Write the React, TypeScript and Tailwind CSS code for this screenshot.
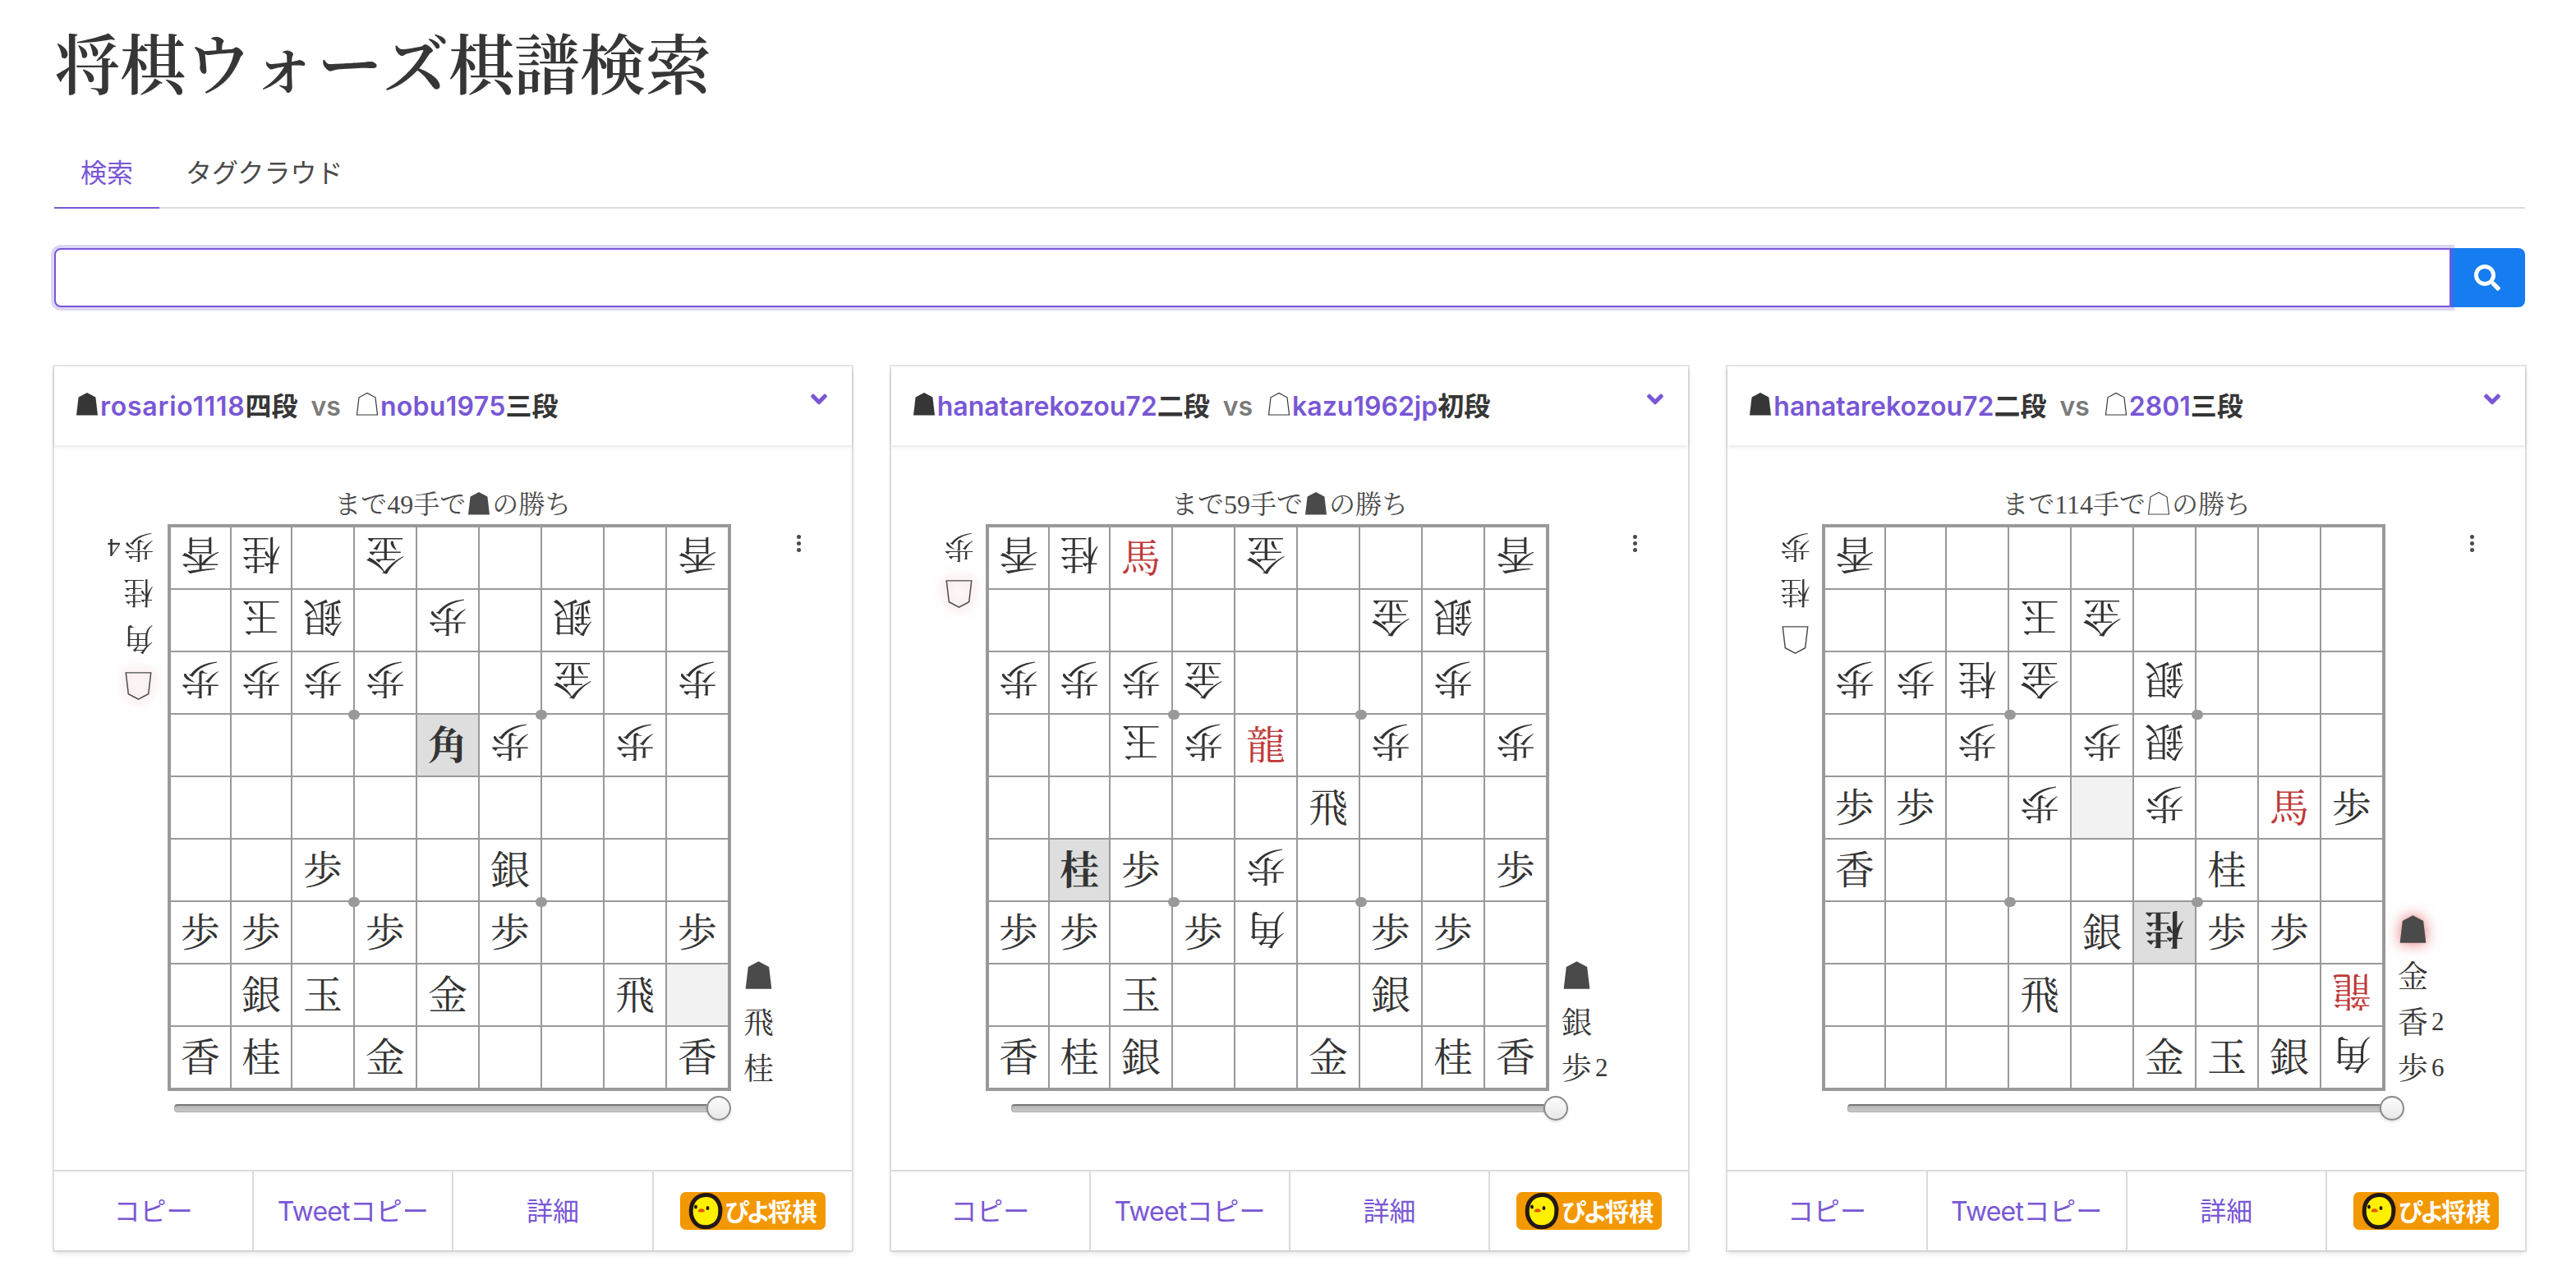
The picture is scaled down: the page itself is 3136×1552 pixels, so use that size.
import { FaAngleDown, FaSearch } from "react-icons/fa";

type Hand = { piece: string; count?: number };

type Game = {
  black: { name: string; grade: string; tracking?: string };
  white: { name: string; grade: string; tracking?: string };
  moves: number;
  winner: "black" | "white";
  board: string[];
  whiteHand: Hand[];
  blackHand: Hand[];
  handWidth: string;
  dots: string;
};

// Cell notation: "v" marks a white piece, "*" the last moved piece,
// "-" the square it came from and "." an empty square.
const games: Game[] = [
  {
    black: { name: "rosario1118", grade: "四段", tracking: "tracking-[0.75px]" },
    white: { name: "nobu1975", grade: "三段", tracking: "tracking-[0.3px]" },
    moves: 49,
    winner: "black",
    board: [
      "v香 v桂 . v金 . . . . v香",
      ". v玉 v銀 . v歩 . v銀 . .",
      "v歩 v歩 v歩 v歩 . . v金 . v歩",
      ". . . . 角* v歩 . v歩 .",
      ". . . . . . . . .",
      ". . 歩 . . 銀 . . .",
      "歩 歩 . 歩 . 歩 . . 歩",
      ". 銀 玉 . 金 . . 飛 -",
      "香 桂 . 金 . . . . 香",
    ],
    whiteHand: [{ piece: "歩", count: 4 }, { piece: "桂" }, { piece: "角" }],
    blackHand: [{ piece: "飛" }, { piece: "桂" }],
    handWidth: "w-[138px] pr-[17px]",
    dots: "left-[216px]",
  },
  {
    black: { name: "hanatarekozou72", grade: "二段" },
    white: { name: "kazu1962jp", grade: "初段" },
    moves: 59,
    winner: "black",
    board: [
      "v香 v桂 馬 . v金 . . . v香",
      ". . . . . . v金 v銀 .",
      "v歩 v歩 v歩 v金 . . . v歩 .",
      ". . v玉 v歩 龍 . v歩 . v歩",
      ". . . . . 飛 . . .",
      ". 桂* 歩 . v歩 . . . 歩",
      "歩 歩 . 歩 v角 . 歩 歩 .",
      ". . 玉 . . . 銀 . .",
      "香 桂 銀 . . 金 . 桂 香",
    ],
    whiteHand: [{ piece: "歩" }],
    blackHand: [{ piece: "銀" }, { piece: "歩", count: 2 }],
    handWidth: "w-[115.33px] pr-[14px]",
    dots: "left-[218px]",
  },
  {
    black: { name: "hanatarekozou72", grade: "二段" },
    white: { name: "2801", grade: "三段" },
    moves: 114,
    winner: "white",
    board: [
      "v香 . . . . . . . .",
      ". . . v玉 v金 . . . .",
      "v歩 v歩 v桂 v金 . v銀 . . .",
      ". . v歩 . v歩 v銀 . . .",
      "歩 歩 . v歩 - v歩 . 馬 歩",
      "香 . . . . . 桂 . .",
      ". . . . 銀 v桂* 歩 歩 .",
      ". . . 飛 . . . . v龍",
      ". . . . . 金 玉 銀 v角",
    ],
    whiteHand: [{ piece: "歩" }, { piece: "桂" }],
    blackHand: [{ piece: "金" }, { piece: "香", count: 2 }, { piece: "歩", count: 6 }],
    handWidth: "w-[114.67px] pr-[14px]",
    dots: "left-[218px]",
  },
];

function Koma({ filled, className }: { filled: boolean; className: string }) {
  return (
    <svg viewBox="0 0 32 32" className={className}>
      <path
        d={filled ? "M3 28.5 5.6 6.5 16 1 26.4 6.5 29 28.5Z" : "M3.5 28 6 6.8 16 1.5 26 6.8 28.5 28Z"}
        fill={filled ? "currentColor" : "none"}
        stroke={filled ? "none" : "currentColor"}
        strokeWidth="1.2"
      />
    </svg>
  );
}

function Cell({ code }: { code: string }) {
  const white = code.startsWith("v");
  const moved = code.endsWith("*");
  const piece = code.replace(/[v*.\-]/g, "");
  const promoted = piece === "馬" || piece === "龍";
  const bg = moved ? "bg-[#dedede]" : code === "-" ? "bg-[#f2f2f2]" : "bg-white";
  return (
    <div className={`flex items-center justify-center ${white ? "pb-[6px]" : "pb-[3px]"} ${bg}`}>
      {piece && (
        <span
          className={`pt-[4px] text-[48px] leading-[48px] ${white ? "rotate-180" : ""} ${moved ? "font-bold" : "font-normal"} ${
            promoted ? "text-[#bf3a3a]" : "text-[#333]"
          }`}
        >
          {piece}
        </span>
      )}
    </div>
  );
}

function HandPiece({ piece, count }: Hand) {
  return (
    <span className="flex h-14 items-center gap-[4px] pt-[3px] text-[#363636]">
      <span className="text-[37px] leading-[40px]">{piece}</span>
      {count && <span className="pb-[4px] text-[31px] leading-[40px]">{count}</span>}
    </span>
  );
}

function Turn({ filled, glow }: { filled: boolean; glow: boolean }) {
  return (
    <span className="flex h-14 w-[37px] items-center justify-center">
      <Koma
        filled={filled}
        className={`size-[39px] shrink-0 overflow-visible text-[#4a4a4a] ${
          glow ? "[filter:drop-shadow(0_0_7px_rgba(220,50,50,.45))_drop-shadow(0_0_10px_rgba(220,50,50,.3))]" : ""
        }`}
      />
    </span>
  );
}

function Board({ game }: { game: Game }) {
  return (
    <div className="relative shrink-0">
      <div className="grid grid-cols-[72px_72px_repeat(7,74px)] grid-rows-[repeat(9,74px)] gap-[2px] border-4 border-[#999] bg-[#999]">
        {game.board.flatMap((row, y) => row.split(" ").map((code, x) => <Cell key={`${y}-${x}`} code={code} />))}
      </div>
      <div className={`absolute top-[226px] ml-[4px] grid grid-cols-2 gap-x-[214px] gap-y-[216px] ${game.dots}`}>
        {[0, 1, 2, 3].map((n) => (
          <span key={n} className="h-3 w-3.5 rounded-full bg-[#999]" />
        ))}
      </div>
    </div>
  );
}

function Slider() {
  return (
    <div className="ml-[146px] flex h-[42px] w-[678px] items-center">
      <div className="h-[10px] flex-1 rounded-l-[4px] border border-[#aaa] border-t-2 border-t-[#777] bg-linear-to-b from-[#b4b4b4] to-[#cacaca]" />
      <div className="-ml-px size-[30px] rounded-full border-2 border-[#8a8a8a] bg-linear-to-b from-[#fcfcfc] to-[#e8e8e8] shadow-[0_2px_3px_rgba(0,0,0,.12)]" />
    </div>
  );
}

function PiyoBadge() {
  return (
    <span className="flex h-[46px] w-[177px] items-center rounded-[7px] bg-[#f39800] pl-[9px]">
      <svg viewBox="0 0 44 46" className="h-[46px] w-11 shrink-0">
        <path
          d="M22 3.4C31 3 38 9 39.6 18.5 40 20 39.8 22 39.8 24 39.5 35 33 42.8 22 42.8 11 42.8 4.2 34 4.2 23 4.2 11.5 11.5 3.8 22 3.4Z"
          fill="#fff000"
          stroke="#231815"
          strokeWidth="5"
        />
        <path d="M38 18v7l4-.5.3-6.5Z" fill="#231815" />
        <ellipse cx="10" cy="18" rx="1.9" ry="2.6" fill="#231815" />
        <ellipse cx="24.5" cy="19.5" rx="1.9" ry="2.6" fill="#231815" />
        <path d="M12.6 23.6C13 19.4 20 19 21 23.2 20.500 24.900 13.200 25 12.600 23.600Z" fill="#ea5504" />
      </svg>
      <span className="ml-[2px] flex items-center pb-[2px] font-['Noto_Sans_CJK_JP',sans-serif] text-[30px] leading-[44px] font-bold text-white">
        <span className="tracking-[-4px]">ぴよ</span>
        <span>将棋</span>
      </span>
    </span>
  );
}

function GameCard({ game }: { game: Game }) {
  return (
    <article className="flex flex-1 flex-col bg-white shadow-[0_4px_6px_rgba(10,10,10,.1),0_0_0_2px_rgba(10,10,10,.1)]">
      <header className="flex h-24 justify-between pr-6 pl-6 text-[32px] leading-[48px] font-semibold text-[#363636] shadow-[0_2px_4px_rgba(10,10,10,.1)]">
        <h2 className="flex items-center pt-[2px]">
          <Koma filled className="mt-[-4px] size-8" />
          <a className={`text-[#7957d5] ${game.black.tracking ?? ""}`}>{game.black.name}</a>
          {game.black.grade}
          <span className="mx-4 text-[#7a7a7a]">vs</span>
          <Koma filled={false} className="mt-[-4px] size-8" />
          <a className={`text-[#7957d5] ${game.white.tracking ?? ""}`}>{game.white.name}</a>
          {game.white.grade}
        </h2>
        <FaAngleDown className="mt-[24px] size-8 text-[#7957d5]" />
      </header>

      <section className="relative h-[882px] pt-12 font-['Liberation_Serif','Noto_Serif_CJK_JP',serif]">
        <p className="flex h-12 items-center justify-center text-[32px] leading-[48px] text-[#4a4a4a]">
          まで{game.moves}手で
          <Koma filled={game.winner === "black"} className="size-8" />
          の勝ち
        </p>
        <div className="flex">
          <div className={`flex shrink-0 flex-col items-end ${game.handWidth}`}>
            {game.whiteHand.map((h) => (
              <div key={h.piece} className="rotate-180">
                <HandPiece {...h} />
              </div>
            ))}
            <div className="rotate-180">
              <Turn filled={false} glow={game.winner === "black"} />
            </div>
          </div>
          <Board game={game} />
          <div className="flex flex-col justify-end pl-[15px]">
            <Turn filled glow={game.winner === "white"} />
            {game.blackHand.map((h) => (
              <HandPiece key={h.piece} {...h} />
            ))}
          </div>
        </div>
        <Slider />
        <div className="absolute top-[109px] right-[62px] flex flex-col gap-[3px]">
          <span className="size-[5px] rounded-full bg-[#4a4a4a]" />
          <span className="size-[5px] rounded-full bg-[#4a4a4a]" />
          <span className="size-[5px] rounded-full bg-[#4a4a4a]" />
        </div>
      </section>

      <footer className="flex h-[98px] divide-x-2 divide-[#dbdbdb] border-t-2 border-[#dbdbdb] text-[32px] leading-[48px] text-[#7957d5]">
        <a className="flex flex-1 items-center justify-center pt-[2px]">コピー</a>
        <a className="flex flex-1 items-center justify-center pt-[2px]">
          <span className="tracking-[-0.8px]">Tweet</span>コピー
        </a>
        <a className="flex flex-1 items-center justify-center pt-[2px]">詳細</a>
        <a className="flex flex-1 items-center justify-center">
          <PiyoBadge />
        </a>
      </footer>
    </article>
  );
}

export default function App() {
  return (
    <main lang="ja" className="h-[1552px] overflow-hidden bg-white px-[66px] pr-[62px] font-['Inter','Noto_Sans_CJK_JP',sans-serif]">
      <h1 className="flex h-[156px] items-center pb-[9px] font-['Noto_Serif_CJK_JP',serif] text-[80px] leading-[90px] font-semibold text-[#363636] [font-kerning:none]">
        将棋ウォーズ棋譜検索
      </h1>

      <nav className="mt-2 flex h-[90px] border-b-2 border-[#dbdbdb] text-[32px] leading-[48px]">
        <a className="-mb-0.5 flex h-[90px] items-center border-b-2 border-[#7957d5] px-8 pt-[6px] text-[#7957d5]">検索</a>
        <a className="flex items-center px-8 pt-[6px] text-[#4a4a4a]">タグクラウド</a>
      </nav>

      <form className="mt-12 flex h-[72px]">
        <div className="relative z-10 flex-1 rounded-l-lg border-2 border-[#7957d5] bg-white shadow-[0_0_0_4px_rgba(121,87,213,.25)]">
          <input aria-label="検索" className="h-full w-full bg-transparent px-5 text-[32px] outline-none" />
        </div>
        <button type="button" className="flex w-[90px] items-center justify-center rounded-r-lg bg-[#167df0] pr-[2px] text-white">
          <FaSearch className="size-8" />
        </button>
      </form>

      <div className="mt-[72px] flex gap-12">
        {games.map((game) => (
          <GameCard key={game.white.name} game={game} />
        ))}
      </div>
    </main>
  );
}
